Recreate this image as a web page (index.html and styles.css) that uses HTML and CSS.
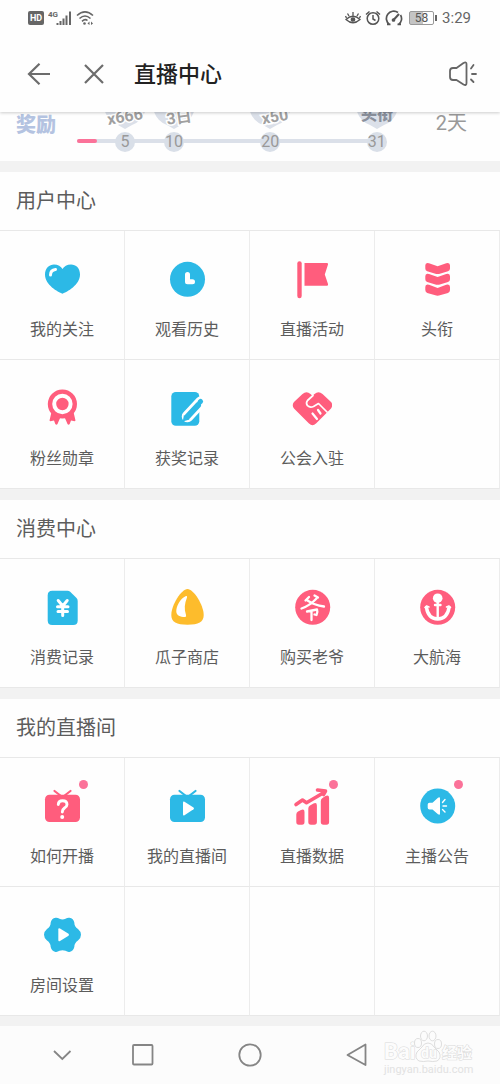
FILE: index.html
```html
<!DOCTYPE html>
<html lang="zh-CN">
<head>
<meta charset="utf-8">
<meta name="viewport" content="width=device-width, initial-scale=1">
<title>直播中心</title>
<link rel="stylesheet" href="styles.css">
</head>
<body>
<header class="top">
  <div class="status">
    <div class="status-group status-left">
      <span class="hd">HD</span>
      <svg width="24" height="16" viewBox="0 0 24 16"><text class="net" x="0" y="7">4G</text><path d="M9.500 15v-2M12.500 15v-4M15.500 15V8.500M18.500 15V5.500M22 15V1.500" fill="none" stroke="#666" stroke-width="2"/></svg>
      <svg width="18" height="16" viewBox="0 0 18 16" fill="none" stroke="#666" stroke-width="1.600"><path d="M1 5.500Q9-1.800 17 5.500M3.500 8.500Q9 3.500 14.500 8.500M6 11.300Q9 8.500 11.500 10.500"/><circle cx="8.500" cy="13.500" r="1.300" fill="#666" stroke="none"/><path d="M13.500 11.500l-2 2 2 1.500zM15 11.500l2 2-2 1.500z" fill="#666" stroke="none"/></svg>
    </div>
    <div class="status-group status-right">
      <svg width="16" height="16" viewBox="0 0 16 16" fill="none" stroke="#555" stroke-width="1.300"><path d="M1 9.500Q8 3 15 9.500Q8 16 1 9.500zM8 5.500V2M4 6L2.500 3.500M12 6l1.500-2.500M1.500 8L.5 6M14.500 8l1-2"/><circle cx="8" cy="9.500" r="1.700" fill="#555"/></svg>
      <svg width="16" height="16" viewBox="0 0 16 16" fill="none" stroke="#555" stroke-width="1.500"><circle cx="8" cy="8.500" r="5.800"/><path d="M8 5v4l2.500 1.500M1 4.500L4.500 1.500M15 4.500L11.500 1.500"/></svg>
      <svg width="18" height="16" viewBox="0 0 18 16" fill="none" stroke="#555" stroke-width="1.700"><path d="M4.500 14.500A7 7 0 0 1 13 2.500M15.500 5A7 7 0 0 1 13.500 14.500M2 14.300h3.500M12.500 14.300H16"/><path d="M8 10.500L14 4" stroke-width="2"/><circle cx="8.500" cy="10" r="1" fill="#555"/></svg>
      <span class="battery">58</span>
      <span class="clock">3:29</span>
    </div>
  </div>
  <div class="bar">
    <button class="icon-btn" aria-label="返回"><svg width="24" height="24" viewBox="0 0 24 24" fill="none" stroke="#6c6c6c" stroke-width="2.200"><path d="M24 12H3M13.500 1.800L3 12l10.500 10.200"/></svg></button>
    <button class="icon-btn" aria-label="关闭"><svg width="24" height="24" viewBox="0 0 24 24" fill="none" stroke="#6c6c6c" stroke-width="2.200"><path d="M3 3l18 18M21 3L3 21"/></svg></button>
    <h1>直播中心</h1>
    <button class="icon-btn" aria-label="公告"><svg width="30" height="28" viewBox="0 0 30 28" fill="none" stroke="#666" stroke-width="1.800" stroke-linejoin="round" stroke-linecap="round"><path d="M5 8H8.500L15.500 3Q18.500 1.500 18.500 4V23Q18.500 26 15.500 24.500L8.500 20H5Q2 20 2 17V11Q2 8 5 8zM23 8.500l2.500-3.500M24 14h4M23 19.500l2.500 2.500"/></svg></button>
  </div>
</header>

<main>
  <section class="reward" aria-label="奖励">
    <strong class="reward-name">奖励</strong>
    <div class="track">
      <div class="line"><div class="done"></div></div>
      <div class="step" style="left:15.6%"><svg class="pin" width="44" height="44" viewBox="0 0 44 44"><path d="M22 43L15 39A21 21 0 1 1 29 39z"/><text class="prize" x="22" y="36" transform="rotate(-10 22 31)">x666</text></svg><span>5</span></div>
      <div class="step" style="left:31.5%"><svg class="pin" width="44" height="44" viewBox="0 0 44 44"><path d="M22 43L15 39A21 21 0 1 1 29 39z"/><text class="prize" x="27" y="37" transform="rotate(-8 27 31)">3日</text></svg><span>10</span></div>
      <div class="step" style="left:62.8%"><svg class="pin" width="44" height="44" viewBox="0 0 44 44"><path d="M22 43L15 39A21 21 0 1 1 29 39z"/><text class="prize" x="27" y="36" transform="rotate(-10 27 31)">x50</text></svg><span>20</span></div>
      <div class="step" style="left:97.4%"><svg class="pin" width="44" height="44" viewBox="0 0 44 44"><path d="M22 43L15 39A21 21 0 1 1 29 39z"/><text class="prize title" x="22" y="34">头衔</text></svg><span>31</span></div>
    </div>
    <span class="days">2天</span>
  </section>

  <section class="panel">
    <h2>用户中心</h2>
    <div class="grid">
      <a class="cell" href="#follow"><svg class="icon blue" viewBox="0 0 40 40"><path d="M20.500 34.700C16 33 3 26 3 15.500C3 9 7.500 5.500 12 5.500C16 5.500 19 7.500 20.500 10C22 7.500 25 5.500 29 5.500C34 5.500 38 9 38 15.500C38 26 25 33 20.500 34.700z"/><path class="w" stroke-width="3" d="M8.500 16Q8.500 11 13.500 10.500"/></svg><span>我的关注</span></a>
      <a class="cell" href="#history"><svg class="icon blue" viewBox="0 0 40 40"><circle cx="20.500" cy="20.300" r="17.500"/><path class="w" stroke-width="5" d="M20.500 15.500V22.700H25.500"/></svg><span>观看历史</span></a>
      <a class="cell" href="#activity"><svg class="icon pink" viewBox="0 0 40 40"><rect x="5.300" y="2.300" width="4.400" height="37" rx="2.200"/><path d="M12.500 4H35Q36.500 4 36 5.500L32.800 15.500L36 25Q36.500 26.700 35 26.700H12.500z"/></svg><span>直播活动</span></a>
      <a class="cell" href="#title"><svg class="icon pink" viewBox="0 0 40 40"><path id="chev" d="M8.300 6.500Q8.300 3 12 4.200L20.600 7.300L29.200 4.200Q33 3 33 6.500V9.500Q33 11.500 31 12.300L22 14.900Q20.600 15.200 19.200 14.900L10.200 12.300Q8.300 11.500 8.300 9.500z"/><use href="#chev" y="10.800"/><use href="#chev" y="21.600"/></svg><span>头衔</span></a>
      <a class="cell" href="#medal"><svg class="icon pink" viewBox="0 0 40 40"><path d="M9.500 24L7.500 32.500Q8 33.500 9.500 33L12 32.500L13.300 36Q14.500 37.500 15.500 36L18.500 29H22.500L25.500 36Q26.500 37.500 27.700 36L29 32.500L31.500 33Q33 33.500 33.500 32.500L31.500 24z"/><circle cx="20.400" cy="16" r="14.600"/><circle cx="20.400" cy="16" r="8.200" stroke="#fff" stroke-width="4"/></svg><span>粉丝勋章</span></a>
      <a class="cell" href="#awards"><svg class="icon blue" viewBox="0 0 40 40"><rect x="4.300" y="4" width="28" height="33.700" rx="4.500"/><path class="w" stroke-width="11.500" d="M20.500 28.500L34 14"/><path class="s" stroke-width="6" d="M20.300 28.700L31 17.200"/><path d="M16.900 27L15.800 33.500L22.500 31.500z"/><path class="s" stroke-width="5" d="M33 14L33.600 13.400"/></svg><span>获奖记录</span></a>
      <a class="cell" href="#guild"><svg class="icon pink" viewBox="0 0 40 40"><path d="M2 14L10.500 6Q14.500 2.500 18.500 6L20.500 7.700L22.500 6Q26.500 2.500 30.500 6L39 14Q41.500 17 39 20.500L24 35.500Q20.500 38.800 17 35.500L2 20.500Q-.5 17 2 14z"/><path class="w" stroke-width="1.700" d="M21 7.500L15.500 12.500Q13.500 15 15.500 17.700Q18 20 21.500 18.500L26.500 15.500L35 24"/><path class="w" stroke-width="2.200" d="M26 22L28.500 25.500M20.500 25.500L25 31"/></svg><span>公会入驻</span></a>
      <span class="cell"></span>
    </div>
  </section>

  <section class="panel">
    <h2>消费中心</h2>
    <div class="grid">
      <a class="cell" href="#spend"><svg class="icon blue" viewBox="0 0 40 40"><path d="M10.200 3.700H25.500Q27 3.700 28.200 4.800L34.500 11Q35.700 12.200 35.700 14V33.500Q35.700 38 31.200 38H10.200Q5.700 38 5.700 33.500V8.200Q5.700 3.700 10.200 3.700z"/><path class="w" stroke-width="3" d="M16.200 13.500L20.700 19L25.200 13.500M20.700 19V28.500M15.500 19.700H26M16 24.500H25.500"/></svg><span>消费记录</span></a>
      <a class="cell" href="#shop"><svg class="icon yellow" viewBox="0 0 40 40"><path d="M20.500 2C26.500 2 36.700 18 36.700 28C36.700 35 31.500 37.700 20.500 37.700S4.300 35 4.300 28C4.300 18 14.500 2 20.500 2z"/><path fill="#fff" d="M19 9C13 11.500 9 20 9.300 24.500C9.500 28.500 13 30 18 30Q19.700 30 19 28C17 22 17.500 16.500 20 10.500Q20.500 8.500 19 9z"/></svg><span>瓜子商店</span></a>
      <a class="cell" href="#master"><svg class="icon pink" viewBox="0 0 40 40"><circle cx="20.700" cy="20.300" r="17.500"/><path class="w" stroke-width="2.300" d="M17 10L13.500 13.500M22.500 8.500L26 10.500M24.500 11.500Q18 18.500 9.500 21.500M15.500 13.500Q22 18 32 19.500M15 24.500L25 22.500Q26 25 24.500 28L22.500 27.500M19.500 24V33"/></svg><span>购买老爷</span></a>
      <a class="cell" href="#voyage"><svg class="icon pink" viewBox="0 0 40 40"><circle cx="20.700" cy="20.300" r="17.500"/><circle cx="20.700" cy="11.200" r="4.800" fill="#fff"/><path class="w" stroke-width="2.400" d="M18 18H23.500M20.700 15V31"/><path class="w" stroke-width="3.400" d="M9.500 20.500Q11 31.500 20.700 32Q30.500 31.500 32 20.500"/><path class="w" stroke-width="1.600" d="M8 20.500L9.500 19L12 20M33.500 20.500L32 19L29.500 20"/></svg><span>大航海</span></a>
    </div>
  </section>

  <section class="panel">
    <h2>我的直播间</h2>
    <div class="grid">
      <a class="cell" href="#howto"><span class="badged"><svg class="icon pink" viewBox="0 0 40 40"><rect x="3" y="8.700" width="35" height="27.300" rx="4.500"/><path class="s" stroke-width="2.200" d="M12.500 5L19 10M28.500 5L22 10"/><path class="w" stroke-width="2.900" d="M16.300 18.500Q16.500 14.800 20.500 14.800Q25 14.800 25 18.500Q25 20.500 22.500 22Q20.300 23.500 20.300 26"/><circle cx="20.200" cy="31" r="2" fill="#fff"/></svg><i class="dot"></i></span><span>如何开播</span></a>
      <a class="cell" href="#room"><svg class="icon blue" viewBox="0 0 40 40"><rect x="3" y="8.700" width="35" height="27.300" rx="4.500"/><path class="s" stroke-width="2.200" d="M12.500 5L19 10M28.500 5L22 10"/><path fill="#fff" d="M16 16.500Q16 15 17.500 15.700L26.500 21.500Q27.500 22.500 26.500 23.300L17.500 29.300Q16 30 16 28.500z"/></svg><span>我的直播间</span></a>
      <a class="cell" href="#data"><span class="badged"><svg class="icon pink" viewBox="0 0 40 40"><path d="M4.300 28.500Q4.300 26.500 6 25.500L9 24Q12.500 22.500 12.500 26V36Q12.500 38.700 10 38.700H6.800Q4.300 38.700 4.300 36zM16.300 22.500Q16.300 20.500 18 19.500L21.500 17.500Q24.900 16 24.900 19.500V36Q24.900 38.700 22.200 38.700H19Q16.300 38.700 16.300 36zM28.800 15Q28.800 13 30.500 12L33.500 10Q37.100 8.500 37.100 12V36Q37.100 38.700 34.500 38.700H31.500Q28.800 38.700 28.800 36z"/><path class="s" stroke-width="3.600" d="M4 18.500L10.500 14L14.500 16.700L32 6.500M25.500 4L33.500 5L31.500 8.500"/></svg><i class="dot"></i></span><span>直播数据</span></a>
      <a class="cell" href="#notice"><span class="badged"><svg class="icon blue" viewBox="0 0 40 40"><circle cx="20.700" cy="20" r="17.500"/><path fill="#fff" d="M12.500 16.700H15.500L21 11.700Q23 10.500 23 12.500V27.500Q23 29.500 21 28.300L15.500 23.500H12.500Q10.700 23.500 10.700 21.700V18.500Q10.700 16.700 12.500 16.700z"/><path class="w" stroke-width="1.400" d="M25.500 16.500L28 13.500M26 20H29.500M25.500 23.500L28 26"/></svg><i class="dot"></i></span><span>主播公告</span></a>
      <a class="cell" href="#settings"><svg class="icon blue" viewBox="0 0 40 40"><path d="M13.500 2.800Q15.500 2.500 17.500 3.800Q20.500 5 23.500 3.800Q25.500 2.500 27.500 2.800Q31.500 3.500 32.300 7.500Q32.300 11.500 36 14Q39 16.500 39 19.800T36 25.600Q32.300 28.100 32.300 32.100Q31.500 36.300 27.500 36.900Q25.500 37.200 23.500 35.800Q20.500 34.500 17.500 35.800Q15.500 37.200 13.500 36.900Q9.500 36.300 8.700 32.100Q8.700 28.100 5 25.600Q2 23.100 2 19.800T5 14Q8.700 11.500 8.700 7.500Q9.500 3.500 13.500 2.800z"/><path fill="#fff" d="M16.300 14.500Q16.300 12.500 18 13.500L26.500 18.800Q27.500 19.800 26.500 20.700L18 26Q16.300 27 16.300 25z"/></svg><span>房间设置</span></a>
      <span class="cell"></span>
      <span class="cell"></span>
      <span class="cell"></span>
    </div>
  </section>
</main>

<nav class="sysnav" aria-label="系统导航">
  <button class="icon-btn" aria-label="收起"><svg width="24" height="24" viewBox="0 0 24 24" fill="none" stroke="#858585" stroke-width="1.800"><path d="M4 8l8.300 8L20.500 8"/></svg></button>
  <button class="icon-btn" aria-label="最近任务"><svg width="24" height="24" viewBox="0 0 24 24" fill="none" stroke="#858585" stroke-width="1.800"><rect x="2" y="2" width="19.500" height="19.500" rx="1"/></svg></button>
  <button class="icon-btn" aria-label="主页"><svg width="24" height="24" viewBox="0 0 24 24" fill="none" stroke="#858585" stroke-width="1.800"><circle cx="12" cy="12" r="10.700"/></svg></button>
  <button class="icon-btn" aria-label="返回"><svg width="24" height="24" viewBox="0 0 24 24" fill="none" stroke="#858585" stroke-width="1.800" stroke-linejoin="round"><path d="M20.500 1.500V22L2.500 12z"/></svg></button>
  <svg class="mark" width="92" height="46" viewBox="0 0 92 46">
    <text class="mark-big" x="1" y="29">Bai</text>
    <g fill="#fcfcfc" stroke="#dedede"><ellipse cx="35" cy="13" rx="3.500" ry="4.500"/><ellipse cx="41" cy="6" rx="3.500" ry="4.800"/><ellipse cx="49.500" cy="6" rx="3.500" ry="4.800"/><ellipse cx="55" cy="14" rx="3.500" ry="4.500"/><path d="M45 13Q49 13 51 17L56 22Q59 28 54 31Q50 32 45 31Q40 32 36 31Q31 28 34 22L39 17Q41 13 45 13z"/></g>
    <text class="mark-du" x="38" y="28">du</text>
    <text class="mark-cn" x="59" y="28">经验</text>
    <text class="mark-url" x="1" y="43">jingyan.baidu.com</text>
  </svg>
</nav>
</body>
</html>
```

FILE: styles.css
```css
* { box-sizing: border-box; }

body {
  margin: 0;
  background: #f2f2f2;
  color: #5c5c5c;
  font-family: Roboto, "Noto Sans CJK SC", sans-serif;
}

svg { display: block; }
h1, h2 { margin: 0; }

/* status bar and title bar */
.top {
  position: relative;
  z-index: 2;
  background: #fefefe;
  box-shadow: 0 1px 3px rgba(0, 0, 0, .2);
}

.status {
  display: flex;
  justify-content: space-between;
  align-items: center;
  height: 36px;
  padding: 0 29px 0 28px;
}

.status-group { display: flex; align-items: center; }
.status-left { gap: 4px; }
.status-right { gap: 4px; }

.hd {
  padding: 0 2px;
  border-radius: 2px;
  background: #666;
  color: #fff;
  font-size: 9px;
  font-weight: 700;
  line-height: 14px;
}

.net { font-size: 8px; font-weight: 700; fill: #666; }

.battery {
  position: relative;
  width: 25px;
  margin-left: 2px;
  border: 1px solid #999;
  border-radius: 2px;
  background: linear-gradient(90deg, #c4c4c4 58%, #fefefe 58%);
  color: #555;
  font-size: 12px;
  line-height: 12px;
  text-align: center;
}

.battery::after {
  content: "";
  position: absolute;
  top: 3px;
  right: -4px;
  width: 2px;
  height: 6px;
  background: #666;
}

.clock { margin-left: 4px; color: #666; font-size: 15px; }

.bar {
  display: flex;
  align-items: center;
  gap: 28px;
  height: 76px;
  padding: 0 22px 0 26px;
}

.bar h1 {
  flex: 1;
  padding-top: 2px;
  color: #222;
  font-size: 22px;
  font-weight: 500;
  line-height: 32px;
}

.icon-btn {
  display: grid;
  place-items: center;
  padding: 0;
  border: 0;
  background: none;
}

.bar .icon-btn + .icon-btn { margin-left: 4px; }

/* reward progress */
.reward {
  display: flex;
  height: 49px;
  padding: 0 33px 0 16px;
  overflow: hidden;
  background: #fefefe;
}

.reward-name { color: #b4c3e1; font-size: 20px; font-weight: 900; line-height: 26px; }
.days { color: #999; font-size: 20px; line-height: 22px; }

.track {
  position: relative;
  flex: 1;
  margin: 0 51px 0 21px;
  padding-top: 27px;
}

.line { height: 4px; border-radius: 2px; background: #dbe0e9; }
.done { width: 20px; height: 4px; border-radius: 2px; background: #fb7299; }

.step {
  position: absolute;
  bottom: 9px;
  display: flex;
  flex-direction: column;
  align-items: center;
  gap: 2px;
  transform: translateX(-50%);
}

.step span {
  width: 20px;
  border-radius: 10px;
  background: #d9dfe8;
  color: #999;
  font-size: 16px;
  line-height: 20px;
  text-align: center;
}

.pin { fill: #dbe0e9; overflow: visible; }

.prize {
  fill: #a0a0a0;
  stroke: #fff;
  stroke-width: 3px;
  paint-order: stroke;
  font-size: 16px;
  font-weight: 700;
  text-anchor: middle;
}

.prize.title { fill: #8a909c; stroke: none; font-weight: 900; }

/* menu panels */
.panel { margin-top: 11px; background: #fefefe; }

.panel h2 {
  padding: 14px 16px;
  border-bottom: 1px solid #e8e8e8;
  font-size: 20px;
  font-weight: 400;
  line-height: 30px;
}

.grid { display: grid; grid-template-columns: repeat(4, 1fr); }

.cell {
  display: flex;
  flex-direction: column;
  align-items: center;
  gap: 19px;
  min-height: 129px;
  padding-top: 28px;
  border-right: 1px solid #ececec;
  border-bottom: 1px solid #e8e8e8;
  color: inherit;
  font-size: 16px;
  line-height: 24px;
  text-decoration: none;
}

.icon { width: 40px; height: 40px; }
.blue { fill: #2cb9e6; color: #2cb9e6; }
.pink { fill: #ff5d7d; color: #ff5d7d; }
.yellow { fill: #fdbc2c; }

.icon .w { fill: none; stroke: #fff; stroke-linecap: round; stroke-linejoin: round; }
.icon .s { fill: none; stroke: currentColor; stroke-linecap: round; stroke-linejoin: round; }

.badged { position: relative; }

.dot {
  position: absolute;
  top: -6px;
  right: -6px;
  width: 9px;
  height: 9px;
  border-radius: 50%;
  background: #fb7299;
}

/* system navigation */
.sysnav {
  position: relative;
  display: grid;
  grid-template-columns: 56px 1fr 1fr 1fr;
  height: 58px;
  margin-top: 10px;
  padding: 0 90px 0 34px;
  background: #fcfcfc;
}

.mark { position: absolute; top: 4px; right: 25px; }
.mark text { fill: #fcfcfc; stroke: #d9d9d9; stroke-width: 1px; paint-order: stroke; font-weight: 700; }
.mark-big { font-size: 22px; }
.mark-du { font-size: 14px; }
.mark-cn { font-size: 15px; }
.mark .mark-url { fill: #e2e2e2; stroke: none; font-size: 11px; font-weight: 400; }
```
